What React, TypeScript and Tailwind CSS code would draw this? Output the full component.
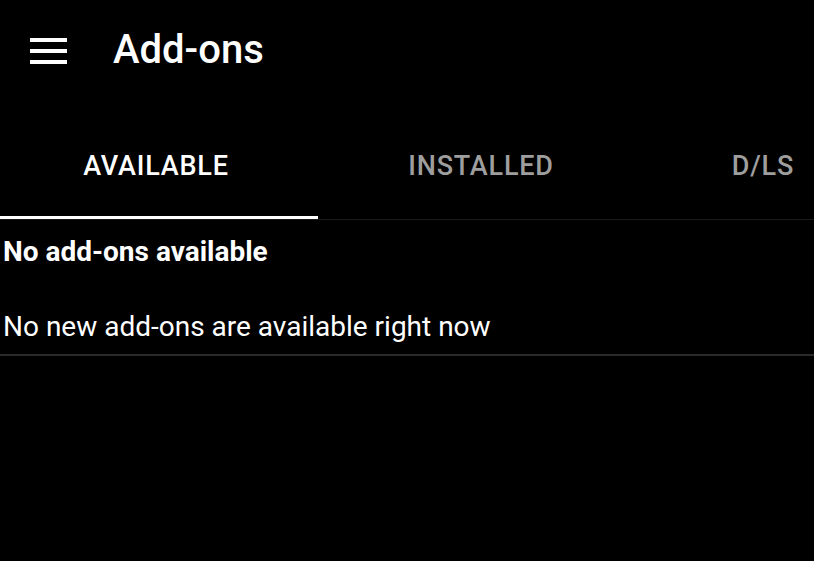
export default function App() {
  return (
    <div className="w-[814px] h-[561px] bg-black text-white overflow-hidden" style={{ fontFamily: 'Roboto, "Noto Sans", sans-serif' }}>
      {/* toolbar */}
      <div className="h-[100px] flex items-center">
        <div className="w-[113px] pl-[30px]">
          <div className="w-[37px] flex flex-col gap-[7px] mt-[2px]">
            <div className="h-[4px] bg-white" />
            <div className="h-[4px] bg-white" />
            <div className="h-[4px] bg-white" />
          </div>
        </div>
        <h1 className="text-[40px] font-medium leading-none">Add-ons</h1>
      </div>

      {/* tabs */}
      <div className="relative h-[120px] border-b border-[#1a1a1a] flex overflow-hidden">
        <div className="w-[318px] shrink-0 flex items-center justify-center text-[27px] font-medium tracking-[0.8px] leading-none text-white pt-[14px] pr-[6px]">
          AVAILABLE
        </div>
        <div className="w-[326px] shrink-0 flex items-center justify-center text-[27px] font-medium tracking-[0.8px] leading-none text-[#9e9e9e] pt-[14px]">
          INSTALLED
        </div>
        <div className="w-[238px] shrink-0 flex items-center justify-center text-[27px] font-medium tracking-[0.8px] leading-none text-[#9e9e9e] pt-[14px]">
          D/LS
        </div>
        <div className="absolute left-0 bottom-[-1px] w-[318px] h-[4px] bg-white" />
      </div>

      {/* empty state */}
      <div className="border-b-[2px] border-[#2a2a2a] pl-[3px] pb-[13px]">
        <div className="text-[28px] font-bold leading-none pt-[18px]">No add-ons available</div>
        <div className="text-[28px] leading-none pt-[47px]">No new add-ons are available right now</div>
      </div>
    </div>
  );
}
